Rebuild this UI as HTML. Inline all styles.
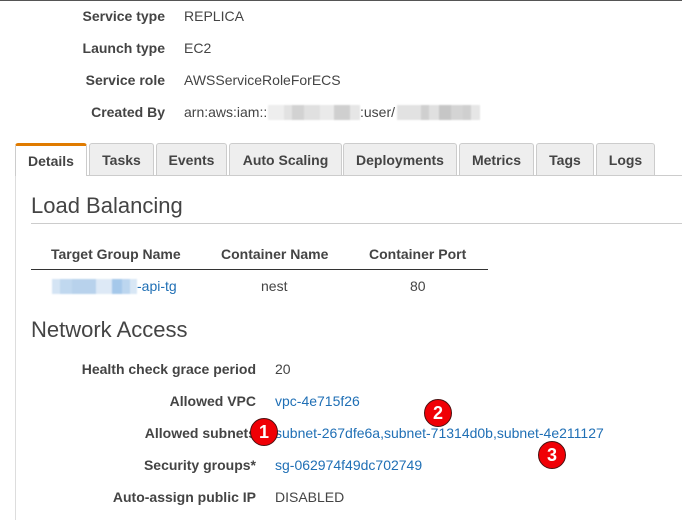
<!DOCTYPE html>
<html>
<head>
<meta charset="utf-8">
<style>
html,body{margin:0;padding:0;background:#fff}
body{width:682px;height:520px;overflow:hidden;position:relative;font-family:"Liberation Sans",sans-serif;font-size:14px;color:#444}
.a{position:absolute;white-space:nowrap;line-height:16px}
.l{font-weight:bold;text-align:right}
a,.link{color:#1f6fb5;text-decoration:none}
.tab{position:absolute;top:143px;height:32px;box-sizing:border-box;background:#eee;border:1px solid #ccc;border-bottom:none;border-radius:3px 3px 0 0;font-weight:bold;text-align:center;line-height:33px;color:#444}
.h{position:absolute;font-size:22px;line-height:26px;color:#444;white-space:nowrap}
.b{position:absolute;border-radius:50%;background:#f00006;border:1px solid #4a1010;width:26px;height:26px;color:#fff;font-weight:bold;font-size:18px;text-align:center;line-height:27px}
.blur{position:absolute;filter:blur(0.8px)}
</style>
</head>
<body>
<div style="position:absolute;left:0;top:0;width:682px;height:1px;background:#555"></div>

<div class="a l" style="left:0;width:165px;top:8px">Service type</div>
<div class="a" style="left:184px;top:8px">REPLICA</div>
<div class="a l" style="left:0;width:165px;top:40px">Launch type</div>
<div class="a" style="left:184px;top:40px">EC2</div>
<div class="a l" style="left:0;width:165px;top:72px">Service role</div>
<div class="a" style="left:184px;top:72px">AWSServiceRoleForECS</div>
<div class="a l" style="left:0;width:165px;top:104px">Created By</div>
<div class="a" style="left:184px;top:104px">arn:aws:iam::</div>
<div class="a" style="left:360px;top:104px">:user/</div>
<div class="blur" style="left:268px;top:105px;width:92px;height:15px;background:linear-gradient(90deg,#eee 0 16px,#e2e2e2 16px 24px,#d2d2d2 24px 36px,#e0e0e0 36px 52px,#eaeaea 52px 66px,#cfcfcf 66px 82px,#e6e6e6 82px)"></div>
<div class="blur" style="left:397px;top:105px;width:83px;height:15px;background:linear-gradient(90deg,#e2e2e2 0 24px,#cfcfcf 24px 32px,#e0e0e0 32px 42px,#c6c6c6 42px 54px,#d4d4d4 54px 66px,#cfcfcf 66px 74px,#e6e6e6 74px)"></div>

<div style="position:absolute;left:15px;top:175px;width:667px;height:1px;background:#ccc"></div>
<div style="position:absolute;left:15px;top:175px;width:1px;height:345px;background:#ddd"></div>
<div class="tab" style="left:15px;width:72px;top:143px;height:33px;background:#fff;border-top:3px solid #e07b00;line-height:31px">Details</div>
<div class="tab" style="left:89px;width:65px">Tasks</div>
<div class="tab" style="left:156px;width:71px">Events</div>
<div class="tab" style="left:229px;width:113px">Auto Scaling</div>
<div class="tab" style="left:343px;width:114px">Deployments</div>
<div class="tab" style="left:459px;width:75px">Metrics</div>
<div class="tab" style="left:536px;width:58px">Tags</div>
<div class="tab" style="left:596px;width:59px">Logs</div>

<div class="h" style="left:31px;top:193px">Load Balancing</div>
<div style="position:absolute;left:31px;top:223px;width:651px;height:1px;background:#ccc"></div>

<div class="a" style="left:51px;top:246px;font-weight:bold">Target Group Name</div>
<div class="a" style="left:221px;top:246px;font-weight:bold">Container Name</div>
<div class="a" style="left:369px;top:246px;font-weight:bold">Container Port</div>
<div style="position:absolute;left:31px;top:269px;width:457px;height:1px;background:#333"></div>
<div class="blur" style="left:52px;top:279px;width:85px;height:15px;background:linear-gradient(90deg,#d4e4f4 0 8px,#c0d8ef 8px 20px,#b8d2ec 20px 44px,#dde9f6 44px 60px,#a5c8ea 60px 70px,#bcd6ef 70px 78px,#d8e7f5 78px)"></div>
<a class="a" style="left:137px;top:278px">-api-tg</a>
<div class="a" style="left:261px;top:278px">nest</div>
<div class="a" style="left:410px;top:278px">80</div>

<div class="h" style="left:31px;top:317px">Network Access</div>

<div class="a l" style="left:0;width:256px;top:361px">Health check grace period</div>
<div class="a" style="left:275px;top:361px">20</div>
<div class="a l" style="left:0;width:256px;top:393px">Allowed VPC</div>
<a class="a" style="left:275px;top:393px">vpc-4e715f26</a>
<div class="a l" style="left:0;width:256px;top:425px">Allowed subnets</div>
<a class="a" style="left:275px;top:425px">subnet-267dfe6a,subnet-71314d0b,subnet-4e211127</a>
<div class="a l" style="left:0;width:256px;top:457px">Security groups*</div>
<a class="a" style="left:275px;top:457px">sg-062974f49dc702749</a>
<div class="a l" style="left:0;width:256px;top:489px">Auto-assign public IP</div>
<div class="a" style="left:275px;top:489px">DISABLED</div>

<div class="b" style="left:250px;top:418px">1</div>
<div class="b" style="left:424px;top:399px">2</div>
<div class="b" style="left:538px;top:441px">3</div>
</body>
</html>
